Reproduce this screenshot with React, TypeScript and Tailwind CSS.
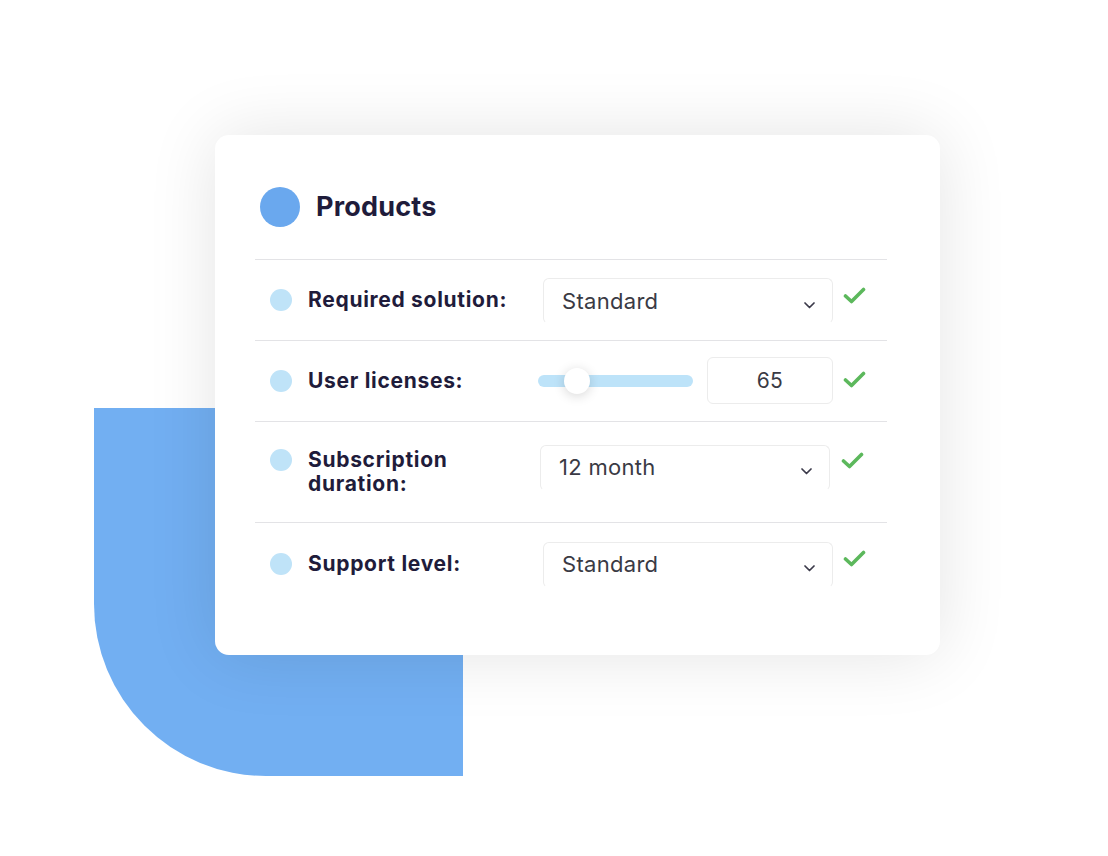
import React from "react";

function Check() {
  return (
    <svg width="23" height="17" viewBox="0 0 23 17" fill="none">
      <path d="M2.5 9 L8.5 14.5 L20.5 2.5" stroke="#5cb85c" strokeWidth="3.6" strokeLinecap="round" strokeLinejoin="round" />
    </svg>
  );
}

function Chevron() {
  return (
    <svg width="11" height="7" viewBox="0 0 11 7" fill="none">
      <path d="M1 1 L5.5 5.5 L10 1" stroke="#3b3a4a" strokeWidth="1.7" strokeLinecap="round" strokeLinejoin="round" />
    </svg>
  );
}

function Select({ value }: { value: string }) {
  return (
    <div className="w-[290px] h-[46px] flex items-center justify-between pl-[18px] pr-[17px] rounded-[6px] border border-[#ececec] border-b-transparent">
      <span className="text-[22px] tracking-[0.3px] text-[#3a3a44]">{value}</span>
      <span className="mt-[8px]"><Chevron /></span>
    </div>
  );
}

function Dot() {
  return <div className="w-[22px] h-[22px] rounded-full bg-[#bfe3f8] shrink-0" />;
}

export default function App() {
  return (
    <div className="relative w-[1108px] h-[856px] bg-white overflow-hidden font-['Inter',sans-serif]">
      <div className="absolute left-[94px] top-[408px] w-[369px] h-[368px] bg-[#72aff2] rounded-bl-[172px]" />
      <div className="relative pt-[135px] pl-[215px]">
        <div className="w-[725px] h-[520px] bg-white rounded-[14px] shadow-[0_0_70px_rgba(0,0,0,0.11)] pt-[52px] pl-[40px] pr-[53px]">
          <div className="flex items-center gap-[16px] pl-[5px] pb-[31px] border-b border-[#e3e3e6]">
            <div className="w-[40px] h-[40px] rounded-full bg-[#6aa8ee]" />
            <span className="text-[27px] font-bold text-[#1f1c3b] tracking-[0.2px]">Products</span>
          </div>

          <div className="flex items-center h-[81px] border-b border-[#e3e3e6]">
            <div className="w-[288px] flex items-center gap-[16px] pl-[15px]">
              <Dot />
              <span className="text-[21px] tracking-[0.7px] font-bold text-[#1f1c3b]">Required solution:</span>
            </div>
            <div className="mt-[3px]"><Select value="Standard" /></div>
            <div className="ml-[10px] -mt-[9px]"><Check /></div>
          </div>

          <div className="flex items-center h-[81px] border-b border-[#e3e3e6]">
            <div className="w-[283px] flex items-center gap-[16px] pl-[15px]">
              <Dot />
              <span className="text-[21px] tracking-[0.7px] font-bold text-[#1f1c3b]">User licenses:</span>
            </div>
            <div className="flex items-center gap-[14px]">
              <div className="relative w-[155px] h-[12px] rounded-full bg-[#bde3f9]">
                <div className="absolute left-[26px] -top-[7px] w-[26px] h-[26px] rounded-full bg-white shadow-[0_2px_12px_rgba(0,0,0,0.16)]" />
              </div>
              <div className="w-[126px] h-[47px] flex items-center justify-center rounded-[6px] border border-[#ececec] text-[21px] tracking-[0.3px] text-[#3a3a44]">
                65
              </div>
            </div>
            <div className="ml-[10px] -mt-[2px]"><Check /></div>
          </div>

          <div className="flex items-center h-[101px] border-b border-[#e3e3e6]">
            <div className="w-[285px] flex items-start gap-[16px] pl-[15px]">
              <div className="mt-[1px]"><Dot /></div>
              <span className="text-[21px] tracking-[0.7px] leading-[24px] font-bold text-[#1f1c3b]">Subscription<br />duration:</span>
            </div>
            <div className="-mt-[8px]"><Select value="12 month" /></div>
            <div className="ml-[11px] -mt-[23px]"><Check /></div>
          </div>

          <div className="flex items-center h-[83px]">
            <div className="w-[288px] flex items-center gap-[16px] pl-[15px]">
              <Dot />
              <span className="text-[21px] tracking-[0.7px] font-bold text-[#1f1c3b]">Support level:</span>
            </div>
            <div className="mt-[1px]"><Select value="Standard" /></div>
            <div className="ml-[10px] -mt-[11px]"><Check /></div>
          </div>
        </div>
      </div>
    </div>
  );
}
